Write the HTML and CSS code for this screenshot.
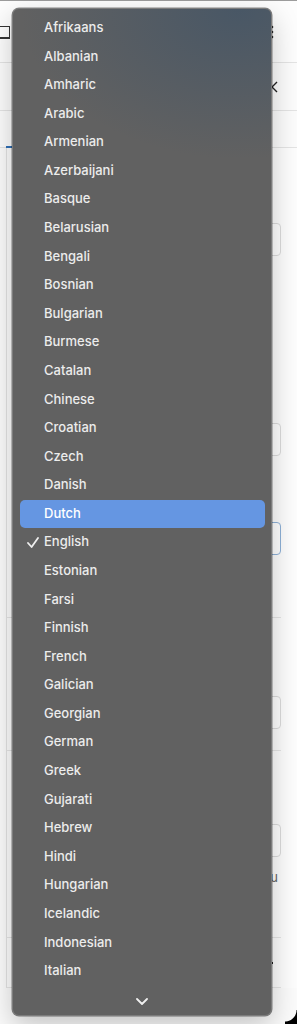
FILE: index.html
```html
<!DOCTYPE html>
<html lang="en">
<head>
    <meta charset="UTF-8">
    <meta name="viewport" content="width=device-width, initial-scale=1.0">
    <title>Language</title>
    <link rel="stylesheet" href="styles.css">
</head>
<body>
    <div class="page">
        <div class="toolbar">
            <span class="box-icon"></span>
            <svg class="kebab" width="4" height="14" viewBox="0 0 4 14">
                <circle cx="2" cy="2" r="1.3" fill="#333"/>
                <circle cx="2" cy="7" r="1.3" fill="#333"/>
                <circle cx="2" cy="12" r="1.3" fill="#333"/>
            </svg>
        </div>

        <div class="panel-head">
            <svg class="close" width="12" height="12" viewBox="0 0 12 12">
                <path d="M1 1 L11 11 M11 1 L1 11" stroke="#222" stroke-width="1.4" fill="none"/>
            </svg>
        </div>

        <div class="tabs">
            <span class="tab active"></span>
        </div>

        <div class="content">
            <div class="section s1">
                <div class="field f1"></div>
                <div class="field f2"></div>
                <div class="field f3 focused"></div>
            </div>
            <div class="section s2">
                <div class="field f4"></div>
            </div>
            <div class="section s3">
                <div class="field f5"></div>
                <div class="hint">u</div>
            </div>
            <div class="section s4">
                <span class="dot"></span>
            </div>
        </div>
    </div>

    <!-- popup menu -->
    <div class="menu">
        <ul class="menu-list">
            <li class="item">Afrikaans</li>
            <li class="item">Albanian</li>
            <li class="item">Amharic</li>
            <li class="item">Arabic</li>
            <li class="item">Armenian</li>
            <li class="item">Azerbaijani</li>
            <li class="item">Basque</li>
            <li class="item">Belarusian</li>
            <li class="item">Bengali</li>
            <li class="item">Bosnian</li>
            <li class="item">Bulgarian</li>
            <li class="item">Burmese</li>
            <li class="item">Catalan</li>
            <li class="item">Chinese</li>
            <li class="item">Croatian</li>
            <li class="item">Czech</li>
            <li class="item">Danish</li>
            <li class="item hover">Dutch</li>
            <li class="item checked">
                <svg class="check" width="12" height="11" viewBox="0 0 12 11">
                    <path d="M1 6 L4.6 10 L11 1" stroke="#efefef" stroke-width="1.8" fill="none" stroke-linecap="round" stroke-linejoin="round"/>
                </svg>English
            </li>
            <li class="item">Estonian</li>
            <li class="item">Farsi</li>
            <li class="item">Finnish</li>
            <li class="item">French</li>
            <li class="item">Galician</li>
            <li class="item">Georgian</li>
            <li class="item">German</li>
            <li class="item">Greek</li>
            <li class="item">Gujarati</li>
            <li class="item">Hebrew</li>
            <li class="item">Hindi</li>
            <li class="item">Hungarian</li>
            <li class="item">Icelandic</li>
            <li class="item">Indonesian</li>
            <li class="item">Italian</li>
        </ul>
        <div class="scroll-down">
            <svg width="12" height="7" viewBox="0 0 12 7">
                <path d="M1 1 L6 6 L11 1" stroke="#f0f0f0" stroke-width="1.8" fill="none" stroke-linecap="round" stroke-linejoin="round"/>
            </svg>
        </div>
    </div>

    <span class="window-corner"></span>
</body>
</html>
```

FILE: styles.css
```css
body {
    margin: 0;
    background: #fbfbfb;
    font-family: Inter, "Liberation Sans", Arial, sans-serif;
    overflow: hidden;
}

.page {
    height: 1024px;
    border-top: 1px solid #9c9c9c;
    box-sizing: border-box;
}

.toolbar {
    height: 62px;
    display: flex;
    align-items: center;
    justify-content: space-between;
    padding-right: 23px;
    border-bottom: 1px solid #e4e4e4;
    background: #fdfdfd;
    box-sizing: border-box;
}

.box-icon {
    display: block;
    width: 10px;
    height: 10px;
    margin-left: -2px;
    margin-top: 1px;
    border: 1.5px solid #333;
    border-bottom-width: 2px;
}

.kebab {
    display: block;
}

.panel-head {
    height: 48px;
    display: flex;
    align-items: center;
    justify-content: flex-end;
    padding-right: 19px;
    border-bottom: 1px solid #e4e4e4;
    box-sizing: border-box;
    background: #fcfcfc;
}

.tabs {
    height: 37px;
    border-bottom: 1px solid #e4e4e4;
    display: flex;
    align-items: flex-end;
    padding-left: 6px;
    box-sizing: border-box;
    background: #fcfcfc;
}

.tab.active {
    display: block;
    width: 60px;
    height: 2px;
    background: #2f6fb5;
    margin-bottom: -1px;
}

.content {
    margin-left: 6px;
    border-left: 1px solid #e2e2e2;
    background: #fdfdfd;
    padding-right: 16px;
}

.section {
    border-bottom: 1px solid #e6e6e6;
    box-sizing: border-box;
    position: relative;
}

.s1 { height: 470px; padding-top: 75px; }
.s2 { height: 133px; padding-top: 78px; }
.s3 { height: 187px; padding-top: 73px; }
.s4 { height: 50px; display: flex; justify-content: flex-end; align-items: center; padding-right: 8px; }

.field {
    height: 33px;
    margin-left: 24px;
    border: 1px solid #dcdcdc;
    border-radius: 4px;
    background: #fff;
    box-sizing: border-box;
}

.f2 { margin-top: 167px; }
.f3 { margin-top: 66px; }

.field.focused {
    border-color: #8fb2d8;
}

.hint {
    text-align: right;
    padding-right: 3px;
    font-size: 13px;
    color: #666;
    margin-top: 12px;
}

.dot {
    display: block;
    width: 3px;
    height: 2px;
    background: #222;
}

/* popup menu */
.menu {
    position: absolute;
    left: 12px;
    top: 8px;
    width: 260px;
    height: 1008px;
    box-sizing: border-box;
    border-radius: 7px;
    border: 1px solid #7c7c7c;
    background:
        radial-gradient(ellipse 220px 150px at 88% 0%, rgba(70, 86, 102, 0.9), rgba(97, 97, 97, 0) 100%),
        #616161;
    box-shadow: 0 0 0 0.5px rgba(0, 0, 0, 0.45), 0 10px 28px rgba(0, 0, 0, 0.22);
    display: flex;
    flex-direction: column;
}

.menu-list {
    list-style: none;
    margin: 0;
    padding: 5px 0 0;
}

.item {
    position: relative;
    height: 28.58px;
    line-height: 26px;
    margin: 0 6px 0 7px;
    padding-left: 24px;
    border-radius: 5px;
    font-size: 13px;
    font-weight: 500;
    color: #ececec;
}

.item.hover {
    background: #6596e2;
    color: #fff;
}

.check {
    position: absolute;
    left: 7px;
    top: 9px;
}

.scroll-down {
    flex: 1;
    display: flex;
    align-items: center;
    justify-content: center;
    padding-top: 2px;
}

.scroll-down svg {
    display: block;
}

.window-corner {
    position: absolute;
    right: 0;
    bottom: 0;
    width: 12px;
    height: 14px;
    background: radial-gradient(circle at 0 0, transparent 11px, #000 12px);
}
```
